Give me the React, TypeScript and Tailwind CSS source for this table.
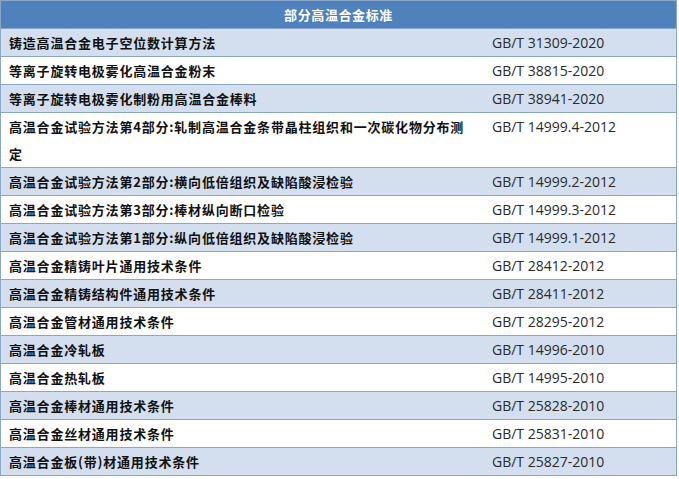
import React from "react";

const rows: [string, string][] = [
  ["铸造高温合金电子空位数计算方法", "GB/T 31309-2020"],
  ["等离子旋转电极雾化高温合金粉末", "GB/T 38815-2020"],
  ["等离子旋转电极雾化制粉用高温合金棒料", "GB/T 38941-2020"],
  ["高温合金试验方法第4部分:轧制高温合金条带晶柱组织和一次碳化物分布测定", "GB/T 14999.4-2012"],
  ["高温合金试验方法第2部分:横向低倍组织及缺陷酸浸检验", "GB/T 14999.2-2012"],
  ["高温合金试验方法第3部分:棒材纵向断口检验", "GB/T 14999.3-2012"],
  ["高温合金试验方法第1部分:纵向低倍组织及缺陷酸浸检验", "GB/T 14999.1-2012"],
  ["高温合金精铸叶片通用技术条件", "GB/T 28412-2012"],
  ["高温合金精铸结构件通用技术条件", "GB/T 28411-2012"],
  ["高温合金管材通用技术条件", "GB/T 28295-2012"],
  ["高温合金冷轧板", "GB/T 14996-2010"],
  ["高温合金热轧板", "GB/T 14995-2010"],
  ["高温合金棒材通用技术条件", "GB/T 25828-2010"],
  ["高温合金丝材通用技术条件", "GB/T 25831-2010"],
  ["高温合金板(带)材通用技术条件", "GB/T 25827-2010"],
];

export default function App() {
  return (
    <div className="w-[679px] h-[479px] bg-white">
      <div className="w-[677px] border border-[#8aa6c8]">
        <div
          className="h-[28px] leading-[28px] bg-[#4f81bd] text-white text-center text-[13px] font-bold tracking-[0.6px] border-b border-[#8aa6c8]"
          style={{ fontFamily: '"Noto Sans CJK SC", sans-serif' }}
        >
          部分高温合金标准
        </div>
        {rows.map(([name, code], i) => (
          <div
            key={code}
            className={`grid grid-cols-[483px_1fr] border-b border-[#8aa6c8] last:border-b-0 ${
              i % 2 === 0 ? "bg-[#d3dfee]" : "bg-white"
            }`}
          >
            <div
              className="pl-[8px] pr-[16px] leading-[27px] text-[13px] font-bold tracking-[0.8px] text-[#111]"
              style={{ fontFamily: '"Noto Sans CJK SC", sans-serif' }}
            >
              {name}
            </div>
            <div
              className="pl-[8px] leading-[27px] text-[14px] text-[#2a2a2a]"
              style={{ fontFamily: '"Open Sans", "Noto Sans", sans-serif' }}
            >
              {code}
            </div>
          </div>
        ))}
      </div>
    </div>
  );
}
